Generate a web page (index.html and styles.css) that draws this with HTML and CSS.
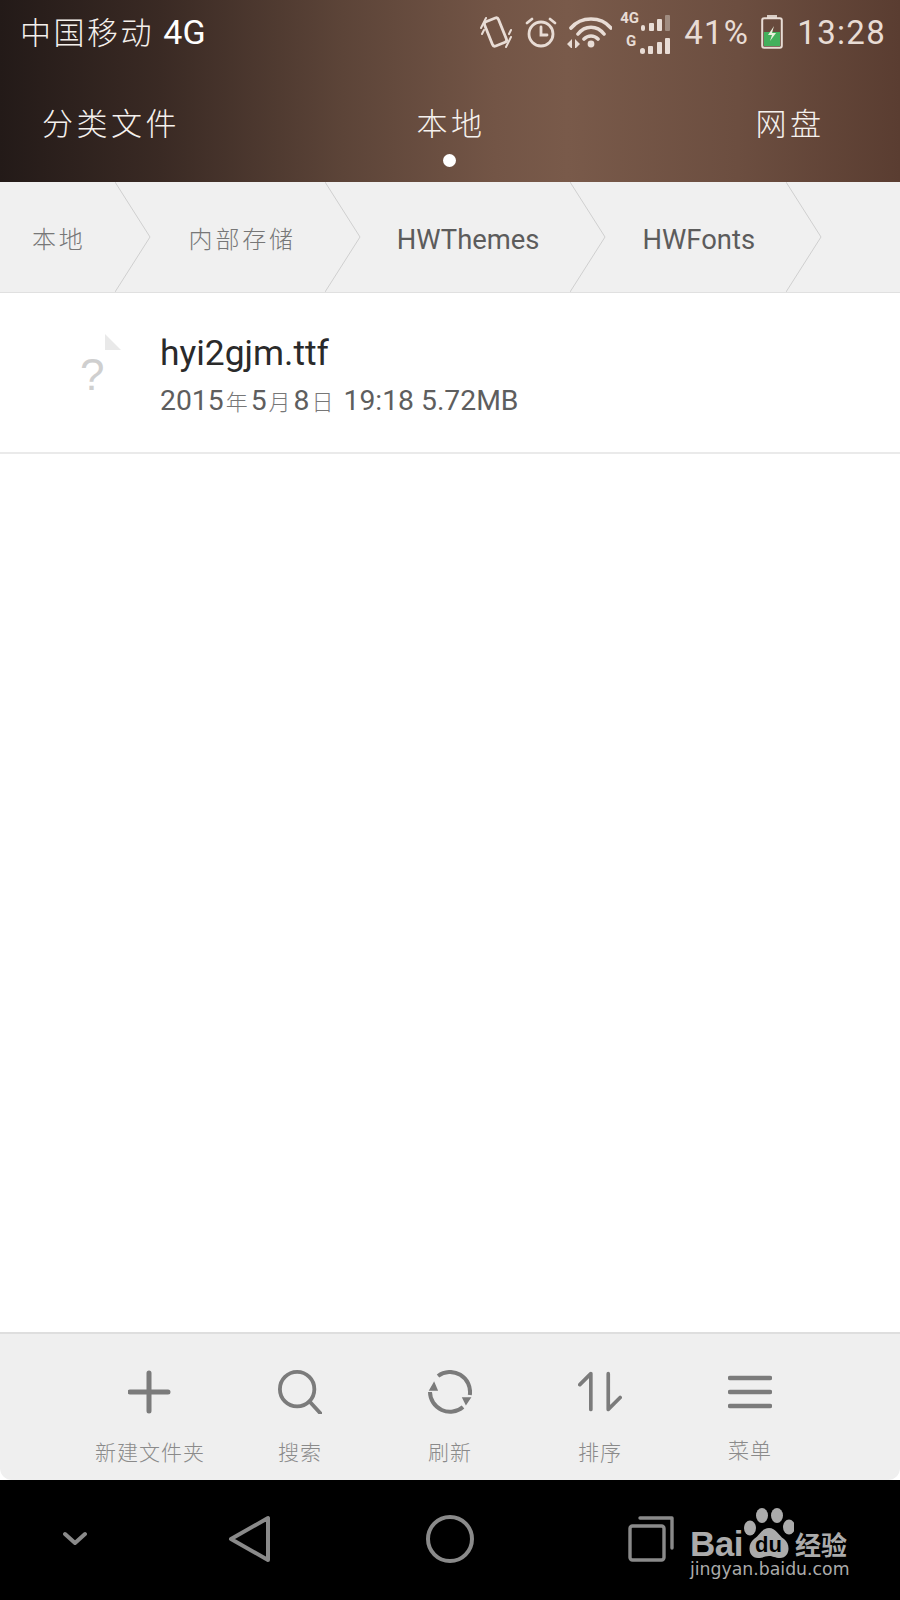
FILE: index.html
```html
<!DOCTYPE html>
<html lang="zh-CN">
<head>
    <meta charset="UTF-8">
    <meta name="viewport" content="width=device-width, initial-scale=1.0">
    <title>文件管理</title>
    <link rel="stylesheet" href="styles.css">
</head>
<body>
    <div class="screen">
        <header class="top">
            <div class="status">
                <div class="carrier">中国移动 <span class="latin">4G</span></div>
                <div class="status-right">
                    <svg class="ic-vibrate" viewBox="0 0 32 34" fill="none" stroke="#e8dcd5" stroke-linecap="round">
                        <rect x="8" y="4" width="15" height="26" rx="2.5" transform="rotate(-22 15.5 17)" stroke-width="2.8"/>
                        <path d="M1 13 6 3M2 19 4 15M31 15 29 19M31 22 26 32" stroke-width="2"/>
                    </svg>
                    <svg class="ic-alarm" viewBox="0 0 32 32" fill="none" stroke="#e8dcd5" stroke-width="2.8" stroke-linecap="round">
                        <circle cx="16" cy="18" r="12"/>
                        <path d="M16 11v8h6M2 7l5-4M30 7l-5-4"/>
                    </svg>
                    <svg class="ic-wifi" viewBox="0 0 46 32" fill="none" stroke="#e8dcd5" stroke-linecap="round">
                        <path d="M5 12C15 0 35 0 45 12M12 18C19 9 31 9 38 18M18 23C22 19 28 19 32 23" stroke-width="3.6"/>
                        <circle cx="25" cy="28" r="3.4" fill="#e8dcd5" stroke="none"/>
                        <path d="M6 23 1 28 6 33ZM9 23 14 28 9 33Z" fill="#e8dcd5" stroke="none"/>
                    </svg>
                    <div class="signal">
                        <div class="signal-row">
                            <span class="net net-4g">4G</span>
                            <i class="b1"></i><i class="b2"></i><i class="b3"></i><i class="b4 off"></i>
                        </div>
                        <div class="signal-row">
                            <span class="net">G</span>
                            <i class="b1"></i><i class="b2"></i><i class="b3"></i><i class="b4"></i>
                        </div>
                    </div>
                    <span class="percent">41%</span>
                    <svg class="ic-battery" viewBox="0 0 22 34">
                        <path d="M6 0h10v3H6z" fill="#d8ccc4"/>
                        <rect x="1.2" y="3.2" width="19.6" height="29.6" rx="2" fill="none" stroke="#e8dcd5" stroke-width="2"/>
                        <rect x="3" y="17" width="16" height="14" fill="#43b05c"/>
                        <path d="M13 11 7 20h4l-2 6 6-8h-4z" fill="#e8f0dc"/>
                    </svg>
                    <span class="clock">13:28</span>
                </div>
            </div>
            <nav class="tabs">
                <div class="tab">分类文件</div>
                <div class="tab tab-on">本地</div>
                <div class="tab">网盘</div>
            </nav>
        </header>

        <div class="crumbs">
            <div class="crumb crumb-first cjk">本地<svg viewBox="0 0 36 110" fill="none" stroke="#cfcfcf" stroke-width="1"><path d="M0 0 35 55 0 110"/></svg></div>
            <div class="crumb crumb-cn cjk">内部存储<svg viewBox="0 0 36 110" fill="none" stroke="#cfcfcf" stroke-width="1"><path d="M0 0 35 55 0 110"/></svg></div>
            <div class="crumb">HWThemes<svg viewBox="0 0 36 110" fill="none" stroke="#cfcfcf" stroke-width="1"><path d="M0 0 35 55 0 110"/></svg></div>
            <div class="crumb">HWFonts<svg viewBox="0 0 36 110" fill="none" stroke="#cfcfcf" stroke-width="1"><path d="M0 0 35 55 0 110"/></svg></div>
        </div>

        <main class="list">
            <div class="file">
                <div class="file-icon">
                    <span class="fold"></span>
                    <span class="mark">?</span>
                </div>
                <div class="file-text">
                    <div class="file-name">hyi2gjm.ttf</div>
                    <div class="file-meta">2015<span class="cjk-small">年</span>5<span class="cjk-small">月</span>8<span class="cjk-small">日</span> 19:18 5.72MB</div>
                </div>
            </div>
        </main>

        <footer class="toolbar">
            <div class="tool">
                <svg viewBox="0 0 44 44" fill="none" stroke="#7b7b7b" stroke-width="5" stroke-linecap="round"><path d="M21 3v38M2 22h38"/></svg>
                <span>新建文件夹</span>
            </div>
            <div class="tool">
                <svg viewBox="0 0 46 46" fill="none" stroke="#7b7b7b" stroke-linecap="round"><circle cx="20" cy="20" r="18" stroke-width="4"/><path d="M33 33 45 46" stroke-width="4"/></svg>
                <span>搜索</span>
            </div>
            <div class="tool">
                <svg viewBox="0 0 44 44" fill="none" stroke="#7b7b7b" stroke-width="4"><path d="M10 6A20 20 0 0 1 41.8 25M35 37A20 20 0 0 1 2 22"/><path d="M6 13 2 20 9 20ZM35 28 42 28 38 34Z" fill="#7b7b7b" stroke="#7b7b7b" stroke-width="1.5"/></svg>
                <span>刷新</span>
            </div>
            <div class="tool">
                <svg viewBox="0 0 48 44" fill="none" stroke="#7b7b7b" stroke-width="4" stroke-linecap="round" stroke-linejoin="round"><path d="M2 14 14 2V41M33 2V41L46 28"/></svg>
                <span>排序</span>
            </div>
            <div class="tool tool-menu">
                <svg viewBox="0 0 44 44" fill="none" stroke="#7b7b7b" stroke-width="4.5" stroke-linecap="round"><path d="M2 8H42M2 22H42M2 36H42"/></svg>
                <span>菜单</span>
            </div>
        </footer>

        <div class="navbar">
            <svg class="nav-hide" viewBox="0 0 24 16" fill="none" stroke="#8a8a8a" stroke-width="4" stroke-linecap="round" stroke-linejoin="round"><path d="M2 3 12 12 22 3"/></svg>
            <svg class="nav-back" viewBox="0 0 44 48" fill="none" stroke="#8a8a8a" stroke-width="4" stroke-linejoin="round"><path d="M40 3V45L3 24Z"/></svg>
            <svg class="nav-home" viewBox="0 0 48 48" fill="none" stroke="#8a8a8a" stroke-width="4"><circle cx="24" cy="24" r="22"/></svg>
            <svg class="nav-recent" viewBox="0 0 46 46" fill="none" stroke="#8a8a8a" stroke-width="3.4" stroke-linejoin="round"><rect x="2" y="10" width="34" height="34" rx="2.5"/><path d="M12 2H44V32" stroke-linecap="round"/></svg>
            <div class="watermark">
                <div class="wm-logo">
                    <span class="wm-bai">Bai</span>
                    <span class="wm-paw">
                        <svg viewBox="0 0 50 52" fill="#ababab">
                            <ellipse cx="6" cy="20" rx="6" ry="7.5"/>
                            <ellipse cx="18" cy="7.5" rx="6" ry="7.5"/>
                            <ellipse cx="33" cy="7.5" rx="6" ry="7.5"/>
                            <ellipse cx="45" cy="19" rx="6" ry="7.5"/>
                            <path d="M25 20C32 20 34 27 40 31 47 36 46 50 36 50 31 50 29 48 25 48 21 48 19 50 14 50 4 50 3 36 10 31 16 27 18 20 25 20Z"/>
                        </svg>
                        <span class="wm-du">du</span>
                    </span>
                    <span class="wm-jy">经验</span>
                </div>
                <div class="wm-url">jingyan.baidu.com</div>
            </div>
        </div>
    </div>
</body>
</html>
```

FILE: styles.css
```css
* {
    box-sizing: border-box;
}
body {
    margin: 0;
    background: #000;
    font-family: "Noto Sans CJK SC", Roboto, sans-serif;
}
.screen {
    width: 900px;
    height: 1600px;
    display: flex;
    flex-direction: column;
    background: #fff;
    overflow: hidden;
}

/* header */
.top {
    height: 182px;
    background: linear-gradient(90deg, #231a18 0%, #3a2a24 18%, #5c4438 38%, #735546 55%, #795a4a 63%, #6c4e40 82%, #5a3d31 100%);
}
.status {
    height: 64px;
    display: flex;
    justify-content: space-between;
    align-items: center;
    padding: 0 14px 0 20px;
}
.carrier {
    color: #f4f0ec;
    font-size: 31px;
    font-weight: 300;
    letter-spacing: 2.5px;
    padding-bottom: 4px;
}
.latin {
    font-family: Roboto, sans-serif;
    font-size: 34px;
    font-weight: 400;
    color: #fff;
    letter-spacing: 0;
}
.status-right {
    display: flex;
    align-items: center;
    color: #e8dcd5;
    font-family: Roboto, sans-serif;
    font-size: 33px;
}
.ic-vibrate {
    width: 32px;
    height: 34px;
    margin-right: 13px;
}
.ic-alarm {
    width: 32px;
    height: 32px;
    margin-right: 9px;
}
.ic-wifi {
    width: 46px;
    height: 32px;
    margin-right: 8px;
}
.signal {
    width: 50px;
    display: flex;
    flex-direction: column;
    gap: 3px;
}
.signal-row {
    height: 20px;
    display: flex;
    align-items: flex-end;
    justify-content: flex-end;
    gap: 3.5px;
}
.net {
    font-size: 15px;
    font-weight: 700;
    line-height: 15px;
    margin-bottom: 5px;
}
.net-4g {
    margin-right: -2px;
}
.signal-row i {
    width: 5px;
    background: #e8dcd5;
    border-radius: 1px;
}
.signal-row .b1 { height: 6px; border-radius: 3px; }
.b2 { height: 8px; }
.b3 { height: 12px; }
.b4 { height: 16px; }
.signal-row i.off {
    background: #a08c80;
}
.percent {
    margin-left: 14px;
    letter-spacing: 1.3px;
}
.ic-battery {
    width: 22px;
    height: 34px;
    margin-left: 12px;
}
.clock {
    margin-left: 14px;
    letter-spacing: 1.3px;
}
.tabs {
    display: grid;
    grid-template-columns: 222px 1fr 220px;
    height: 118px;
    text-align: center;
    color: #f5f1ee;
    font-size: 31px;
    font-weight: 300;
    letter-spacing: 3.5px;
}
.tab {
    position: relative;
    line-height: 116px;
}
.tab-on::after {
    content: "";
    position: absolute;
    left: 50%;
    top: 90px;
    width: 13px;
    height: 13px;
    margin-left: -8px;
    border-radius: 50%;
    background: #fff;
}

/* breadcrumb */
.crumbs {
    height: 111px;
    display: flex;
    background: #f0f0f0;
    border-bottom: 1px solid #e0e0e0;
    font-family: Roboto, sans-serif;
    font-size: 27.4px;
    color: #5c5c5c;
}
.crumb {
    position: relative;
    padding: 0 31px 0 72px;
    line-height: 116px;
    white-space: nowrap;
}
.crumb-first {
    padding: 0 29px 0 32px;
}
.crumb-cn {
    padding: 0 29px 0 74px;
}
.crumb svg {
    position: absolute;
    left: 100%;
    top: 0;
    width: 36px;
    height: 110px;
}
.cjk {
    font-family: "Noto Sans CJK SC", sans-serif;
    font-size: 24px;
    font-weight: 300;
    letter-spacing: 2.8px;
    line-height: 112px;
    color: #777;
}

/* file list */
.list {
    flex: 1;
}
.file {
    height: 161px;
    display: flex;
    border-bottom: 2px solid #eaeaea;
    padding-left: 80px;
}
.file-icon {
    position: relative;
    width: 80px;
}
.fold {
    position: absolute;
    left: 25px;
    top: 41px;
    border-style: solid;
    border-width: 16px 0 0 16px;
    border-color: transparent transparent transparent #e9e9e9;
    width: 0;
    height: 0;
}
.mark {
    position: absolute;
    left: 0;
    top: 57px;
    font-family: "Liberation Sans", sans-serif;
    font-size: 44px;
    line-height: 50px;
    color: #cfcfcf;
}
.file-text {
    font-family: Roboto, sans-serif;
    padding-top: 36px;
}
.file-name {
    font-size: 35.4px;
    line-height: 48px;
    color: #2a2a2a;
}
.file-meta {
    font-size: 28.3px;
    line-height: 44px;
    margin-top: 1px;
    color: #5e5e5e;
    white-space: pre;
}
.cjk-small {
    font-family: "Noto Sans CJK SC", sans-serif;
    font-weight: 300;
    font-size: 22px;
    margin: 0 3px 0 2px;
    color: #777;
}

/* toolbar */
.toolbar {
    height: 148px;
    display: grid;
    grid-template-columns: repeat(5, 150px);
    padding: 0 75px;
    background: #efefef;
    border-top: 2px solid #dedede;
    border-radius: 0 0 12px 12px;
}
.tool {
    display: flex;
    flex-direction: column;
    align-items: center;
    padding-top: 36px;
    color: #8a8a8a;
    font-size: 21px;
    font-weight: 300;
    letter-spacing: 1px;
}
.tool svg {
    width: 44px;
    height: 44px;
}
.tool span {
    margin-top: 22px;
    line-height: 30px;
    white-space: nowrap;
}
.tool-menu span {
    margin-top: 20px;
}

/* system nav */
.navbar {
    position: relative;
    height: 120px;
    flex: none;
    background: #000;
    display: flex;
    align-items: center;
    padding-bottom: 3px;
}
.nav-hide {
    width: 24px;
    height: 16px;
    margin-left: 63px;
}
.nav-back {
    width: 44px;
    height: 48px;
    margin-left: 141px;
}
.nav-home {
    width: 48px;
    height: 48px;
    margin-left: 154px;
}
.nav-recent {
    width: 46px;
    height: 46px;
    margin-left: 154px;
}
.watermark {
    position: absolute;
    left: 690px;
    top: 24px;
    width: 165px;
    color: #ababab;
}
.wm-logo {
    display: flex;
    align-items: flex-end;
    height: 56px;
}
.wm-bai {
    font-family: "Liberation Sans", sans-serif;
    font-weight: 700;
    font-size: 35px;
    line-height: 32px;
    letter-spacing: -0.5px;
}
.wm-paw {
    position: relative;
    width: 50px;
    height: 52px;
    margin-left: 1px;
}
.wm-paw svg {
    display: block;
    width: 50px;
    height: 52px;
}
.wm-du {
    position: absolute;
    left: 11px;
    bottom: 4px;
    font-family: "Liberation Sans", sans-serif;
    font-weight: 700;
    font-size: 22px;
    line-height: 22px;
    color: #000;
}
.wm-jy {
    font-size: 26px;
    font-weight: 700;
    line-height: 32px;
    margin-left: 1px;
    white-space: nowrap;
}
.wm-url {
    font-family: "DejaVu Sans", sans-serif;
    font-size: 17.3px;
    line-height: 18px;
    white-space: nowrap;
}
```
